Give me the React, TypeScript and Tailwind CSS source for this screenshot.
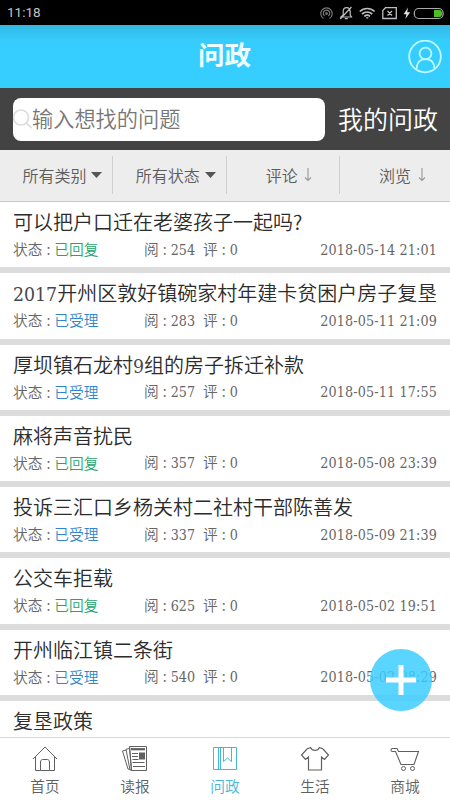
import React from 'react';

type Post = { title: string; meta?: { replied: boolean; views: number; date: string } };

const posts: Post[] = [
  { title: '可以把户口迁在老婆孩子一起吗?', meta: { replied: true, views: 254, date: '2018-05-14 21:01' } },
  { title: '2017开州区敦好镇碗家村年建卡贫困户房子复垦', meta: { replied: false, views: 283, date: '2018-05-11 21:09' } },
  { title: '厚坝镇石龙村9组的房子拆迁补款', meta: { replied: false, views: 257, date: '2018-05-11 17:55' } },
  { title: '麻将声音扰民', meta: { replied: true, views: 357, date: '2018-05-08 23:39' } },
  { title: '投诉三汇口乡杨关村二社村干部陈善发', meta: { replied: false, views: 337, date: '2018-05-09 21:39' } },
  { title: '公交车拒载', meta: { replied: true, views: 625, date: '2018-05-02 19:51' } },
  { title: '开州临江镇二条街', meta: { replied: false, views: 540, date: '2018-05-02 08:29' } },
  { title: '复垦政策' },
];

function Num({ children }: { children: React.ReactNode }) {
  return <span className="font-['DejaVu_Serif_Condensed','DejaVu_Serif',serif] font-normal text-[0.965em]">{children}</span>;
}

function Title({ text }: { text: string }) {
  return (
    <>
      {text.split(/(\d+)/).map((part, i) =>
        /^\d+$/.test(part) ? <span key={i} className="text-[#484848]"><Num>{part}</Num></span> : <span key={i}>{part}</span>
      )}
    </>
  );
}

function StatusBar() {
  return (
    <div className="flex h-[25px] shrink-0 items-center justify-between bg-black pl-[7px] pr-[6px]">
      <span className="pt-px font-[Roboto,sans-serif] text-[13.500px] leading-none text-[#c4c4c4]">11:18</span>
      <svg width="126" height="16" viewBox="318 4 126 16" fill="none" stroke="#bdbdbd" strokeWidth="1.2">
        <g stroke="#777">
          <path d="M323.5 17.500a5.700 5.700 0 1 1 6 0M324.700 15a3.200 3.200 0 1 1 3.600 0" />
          <circle cx="326.500" cy="12.600" r="0.800" fill="#777" />
        </g>
        <path d="M341 16h10.500l-1.300-2V10.500c0-2.600-1.300-3.800-3.400-3.800s-3.600 1.200-3.600 3.800V14zM344.800 17.700h3M351.500 6l-11.300 12" />
        <path d="M359.800 10.500c4.300-4 10.500-4 14.800 0M362 13c3-2.700 7.300-2.700 10.300 0M364.400 15.400c1.700-1.500 3.900-1.500 5.600 0" strokeWidth="1.700" />
        <path d="M365.700 16.200h3l-1.500 1.800z" fill="#bdbdbd" stroke="none" />
        <path d="M385.500 6.700h10.800v10.800h-13.500V9.500zM387.500 10l4.500 4.500M392 10l-4.500 4.500" strokeWidth="1.300" />
        <path d="M408 6.500l-4.300 6.700h2.800l-1.200 4.800 4.900-6.700h-3z" fill="#e5e5e5" stroke="none" />
        <rect x="414.300" y="7.500" width="28.800" height="10" rx="4.500" stroke="#aaa" />
        <path d="M434 9h5.500c1.700 0 2.500 1.500 2.500 3.500s-.8 3.500-2.500 3.500H434z" fill="#4ebf24" stroke="none" />
      </svg>
    </div>
  );
}

function Header() {
  return (
    <header className="grid h-[63px] shrink-0 grid-cols-[1fr_auto_1fr] items-center bg-[linear-gradient(#33b7e3_0,#36cdfd_16px,#34ceff_100%)] pr-[8px] pl-[7px]">
      <span />
      <h1 className="pb-[4px] text-[26.500px] leading-none font-bold text-[#edfdff]">问政</h1>
      <svg className="justify-self-end" width="34" height="34" viewBox="0 0 34 34" fill="none" stroke="#c2fbff" strokeWidth="1.800">
        <circle cx="17" cy="16.500" r="15.800" />
        <circle cx="17.500" cy="13.500" r="5.900" />
        <path d="M8.500 29c.3-7 3.800-9.800 9-9.800s8.700 2.800 9 9.300" />
      </svg>
    </header>
  );
}

function SearchBar() {
  return (
    <div className="flex h-[62px] shrink-0 items-center justify-between bg-[#434343] pr-[12px] pl-[13px]">
      <div className="flex h-[43px] w-[312px] items-center rounded-[8px] bg-white">
        <svg width="19" height="22" viewBox="0 0 19 22" fill="none" stroke="#dedede" strokeWidth="1.700">
          <circle cx="8" cy="9.500" r="7.500" />
          <path d="M13 15l6 5" />
        </svg>
        <span className="pb-[2px] text-[21.200px] leading-none font-[350] text-[#777]">输入想找的问题</span>
      </div>
      <span className="pb-px text-[25px] leading-none font-[350] text-white">我的问政</span>
    </div>
  );
}

function Filters() {
  const items = [
    { label: '所有类别', menu: true, pad: 'w-[113.400px] border-r pr-[10px]' },
    { label: '所有状态', menu: true, pad: 'w-[113.400px] border-r pr-[10px]' },
    { label: '评论', menu: false, pad: 'w-[113.400px] border-r pr-[27px]' },
    { label: '浏览', menu: false, pad: 'flex-1 pr-[24.500px]' },
  ];
  return (
    <div className="flex h-[52px] shrink-0 border-b border-[#c9c9c9] bg-[#ededed] pt-[6px] pb-[7px] font-[350] text-[#5c5c5c]">
      {items.map((item) => (
        <div key={item.label} className={`flex h-[38px] items-center justify-end border-[#d0d0d0] text-[16px] leading-none ${item.pad}`}>
          <span>{item.label}</span>
          {item.menu ? (
            <svg className="ml-[5px]" width="11" height="6" viewBox="0 0 11 6"><path d="M0 0h11L5.500 6z" fill="#555" /></svg>
          ) : (
            <svg className="ml-[6.500px]" width="8" height="14" viewBox="0 0 8 14" fill="none" stroke="#999" strokeWidth="1.100"><path d="M4 0v12M1 9.500l3 3 3-3" /></svg>
          )}
        </div>
      ))}
    </div>
  );
}

function PostRow({ post }: { post: Post }) {
  const { meta } = post;
  return (
    <article className={`flex shrink-0 flex-col px-[13px] pt-[7px] ${meta ? 'h-[71.250px] border-b-[6px] border-[#dcdcdc]' : ''}`}>
      <h2 className="h-[26px] text-[20px] leading-[26px] font-[350] whitespace-nowrap text-[#2c2c2c]"><Title text={post.title} /></h2>
      {meta && (
        <div className="mt-[4px] flex h-[20px] items-center text-[14.700px] leading-[20px] font-[350] whitespace-nowrap text-[#666]">
          <span className="w-[131px]">
            状态<span className="mx-[4px]">:</span>
            <span className={meta.replied ? 'text-[#22a76b]' : 'text-[#3285cb]'}>{meta.replied ? '已回复' : '已受理'}</span>
          </span>
          <span>阅<span className="mx-[4px]">:</span><Num>{meta.views}</Num></span>
          <span className="ml-[8px]">评<span className="mx-[4px]">:</span><Num>0</Num></span>
          <span className="ml-auto tracking-[0.150px]"><Num>{meta.date}</Num></span>
        </div>
      )}
    </article>
  );
}

function NavIcon({ name }: { name: string }) {
  const common = { width: 30, height: 26, viewBox: '0 0 30 26', fill: 'none', stroke: 'currentColor', strokeWidth: 1 };
  switch (name) {
    case '首页':
      return <svg {...common}><path d="M3 13L15 1l12 12M5.500 11v13.500h5V16c0-1.500 1-2.500 2-2.500h5c1 0 2 1 2 2.500v8.500h5V11M10.500 24.500h9" /></svg>;
    case '读报':
      return (
        <svg {...common}>
          <path d="M9.500.5h17v24h-15zM9.500.5l2 24M9 2.500l-3 .8L10 24h2M6 4l-3.500 1L8 23l2 .5" />
          <path d="M11 3.200h14" strokeWidth="2.200" />
          <path d="M12 7.500h6M12 10.500h6M12.500 13.500h6M12.500 16.500h12M13 20.500h12" />
          <rect x="19.500" y="7" width="5" height="6" fill="currentColor" />
        </svg>
      );
    case '问政':
      return <svg {...common}><path d="M3.500 1.500h23v22h-23zM8.500 1.500v22M10.500 1.500v22M13.500 1.500v14l4-3.500 4 3.500v-14" /></svg>;
    case '生活':
      return <svg {...common}><path d="M10.500 1.500L7 3 1.500 9l4 4.500 3-2.500v13h13V11l3 2.500 4-4.500L23 3l-3.500-1.500c-1 2-2.700 3-4.500 3s-3.500-1-4.500-3z" strokeWidth="1.200" /></svg>;
    default:
      return <svg {...common}><path d="M2.500 5.500h3l5.500 13H24l4.500-13H8.500L7 2.500H2.500a1.500 1.500 0 0 0 0 3" strokeWidth="1.100" /><circle cx="13.500" cy="22.500" r="2" /><circle cx="22.500" cy="22.500" r="2" /></svg>;
  }
}

function BottomNav() {
  return (
    <nav className="grid h-[63px] shrink-0 grid-cols-5 border-t border-[#d8d8d8] bg-white pt-[8px]">
      {['首页', '读报', '问政', '生活', '商城'].map((name) => (
        <div key={name} className={`flex flex-col items-center ${name === '问政' ? 'text-[#43b9d5]' : 'text-[#606060]'}`}>
          <NavIcon name={name} />
          <span className="mt-[5px] text-[14.700px] leading-[18px] font-[350]">{name}</span>
        </div>
      ))}
    </nav>
  );
}

export default function App() {
  return (
    <main className="relative flex h-[800px] w-[450px] flex-col overflow-hidden bg-white font-['Noto_Sans_CJK_SC',sans-serif]">
      <StatusBar />
      <Header />
      <SearchBar />
      <Filters />
      <section className="flex min-h-0 flex-1 flex-col overflow-hidden">
        {posts.map((post) => <PostRow key={post.title} post={post} />)}
      </section>
      <BottomNav />
      <button aria-label="+" className="absolute right-[18px] bottom-[89px] flex size-[62px] items-center justify-center rounded-full bg-[#3dceff]/85">
        <svg width="30" height="30" viewBox="0 0 30 30" stroke="#fff" strokeWidth="5"><path d="M15 0v30M0 15h30" /></svg>
      </button>
    </main>
  );
}
